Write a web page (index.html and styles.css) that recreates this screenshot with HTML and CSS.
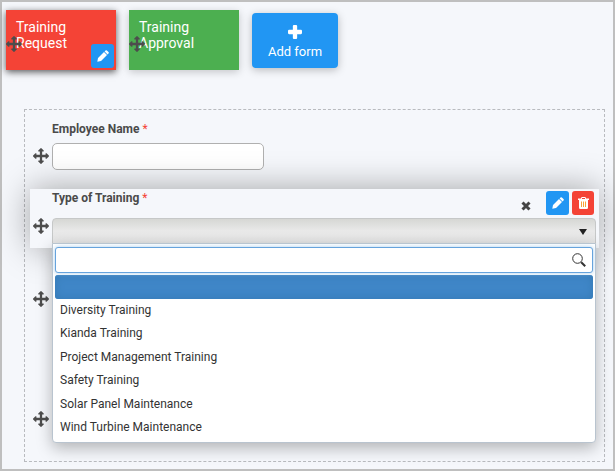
FILE: index.html
```html
<!DOCTYPE html>
<html lang="en">
<head>
<meta charset="utf-8">
<meta name="viewport" content="width=device-width, initial-scale=1">
<title>Form designer</title>
<link rel="stylesheet" href="styles.css">
</head>
<body>
<svg class="sprite" aria-hidden="true">
  <symbol id="move" viewBox="0 0 1792 1792"><path d="M1792 896q0 26-19 45l-256 256q-19 19-45 19t-45-19-19-45v-128h-384v384h128q26 0 45 19t19 45-19 45l-256 256q-19 19-45 19t-45-19l-256-256q-19-19-19-45t19-45 45-19h128v-384h-384v128q0 26-19 45t-45 19-45-19l-256-256q-19-19-19-45t19-45l256-256q19-19 45-19t45 19 19 45v128h384v-384h-128q-26 0-45-19t-19-45 19-45l256-256q19-19 45-19t45 19l256 256q19 19 19 45t-19 45-45 19h-128v384h384v-128q0-26 19-45t45-19 45 19l256 256q19 19 19 45z"/></symbol>
  <symbol id="pencil" viewBox="0 0 12 12"><path d="M.3 11.700 1 8 7 2 10 5 4 11zM7.600 1.400l.9-.9q.7-.6 1.400 0l1.600 1.600q.6.7 0 1.400l-.9.9z"/></symbol>
</svg>
<main class="page">
  <nav class="forms" aria-label="Forms">
    <section class="card card-active">
      <span class="card-title">Training Request</span>
      <svg class="icon-move card-move" aria-hidden="true"><use href="#move"/></svg>
      <button class="tool tool-edit card-edit" aria-label="Edit form"><svg class="icon-pencil"><use href="#pencil"/></svg></button>
    </section>
    <section class="card card-approval">
      <span class="card-title">Training Approval</span>
      <svg class="icon-move card-move" aria-hidden="true"><use href="#move"/></svg>
    </section>
    <button class="add-form">
      <svg class="icon-plus" viewBox="0 0 13 13" aria-hidden="true"><path d="M4.500 1q0-1 1-1h2q1 0 1 1v3.500H12q1 0 1 1v2q0 1-1 1H8.500V12q0 1-1 1h-2q-1 0-1-1V8.500H1q-1 0-1-1v-2q0-1 1-1h3.500z"/></svg>
      <span>Add form</span>
    </button>
  </nav>
  <form class="canvas">
    <div class="field">
      <label class="label" for="employee">Employee Name <span class="required">*</span></label>
      <div class="row">
        <svg class="icon-move" aria-hidden="true"><use href="#move"/></svg>
        <input class="text" id="employee" type="text">
      </div>
    </div>
    <div class="field field-active">
      <div class="heading">
        <label class="label" for="training">Type of Training <span class="required">*</span></label>
        <div class="tools">
          <button class="clear" type="button" aria-label="Clear"><svg class="icon-clear" viewBox="0 0 10 10"><path d="M1.500 1.500l7 7M8.500 1.500l-7 7"/></svg></button>
          <button class="tool tool-edit" type="button" aria-label="Edit field"><svg class="icon-pencil"><use href="#pencil"/></svg></button>
          <button class="tool tool-delete" type="button" aria-label="Delete field"><svg class="icon-trash" viewBox="0 0 11 12"><path class="trash-body" d="M3 1.500Q3 0 4 0h3q1 0 1 1.500h3V3h-1v7.500q0 1.500-1.200 1.500H2.200Q1 12 1 10.500V3H0V1.500z"/><path class="trash-top" d="M4 1.500h3"/><path class="trash-lines" d="M3.500 4.500v5.500M5.500 4.500v5.500M7.500 4.500v5.500"/></svg></button>
        </div>
      </div>
      <div class="row">
        <svg class="icon-move" aria-hidden="true"><use href="#move"/></svg>
        <div class="combo">
          <select class="select" id="training"><option></option></select>
          <svg class="icon-arrow" viewBox="0 0 8 6" aria-hidden="true"><path d="M0 0h8L4 6z"/></svg>
          <div class="dropdown">
            <div class="search-box">
              <input class="search" type="text" aria-label="Search options">
              <svg class="icon-search" viewBox="0 0 14 14" aria-hidden="true"><circle cx="5.500" cy="5.500" r="4.800"/><path class="handle" d="M9.200 9.200l4 4"/></svg>
            </div>
            <ul class="options" role="listbox" aria-label="Type of Training">
              <li class="option option-selected" role="option" aria-selected="true"></li>
              <li class="option" role="option">Diversity Training</li>
              <li class="option" role="option">Kianda Training</li>
              <li class="option" role="option">Project Management Training</li>
              <li class="option" role="option">Safety Training</li>
              <li class="option" role="option">Solar Panel Maintenance</li>
              <li class="option" role="option">Wind Turbine Maintenance</li>
            </ul>
          </div>
        </div>
      </div>
    </div>
    <div class="field field-medium"><svg class="icon-move" aria-hidden="true"><use href="#move"/></svg></div>
    <div class="field field-large"><svg class="icon-move" aria-hidden="true"><use href="#move"/></svg></div>
  </form>
</main>
</body>
</html>
```
FILE: styles.css
```css
* { box-sizing: border-box; }
body { margin: 0; background: #f5f7fb; color: #333; font: 12px/16px Roboto, "Liberation Sans", sans-serif; }
button { border: 0; padding: 0; font: inherit; color: inherit; }
svg { display: block; flex: none; }
.sprite { display: none; }
.page { min-height: 100vh; border: 2px solid #bfbfbf; padding: 8px 8px 7px 4px; }

.forms { display: flex; gap: 13px; align-items: flex-start; }
.card { position: relative; width: 110px; height: 60px; padding: 9px 10px; color: #fff; font-size: 14px; box-shadow: 0 2px 8px rgba(0, 0, 0, .2); }
.card-title { display: block; width: 64px; }
.card-active { background: #f44336; box-shadow: 0 2px 7px rgba(0, 0, 0, .65); }
.card-approval { background: #4caf50; }
.card-move { position: absolute; left: 0; top: 26px; }
.card-edit { position: absolute; right: 2px; bottom: 2px; }
.add-form { display: flex; flex-direction: column; align-items: center; gap: 5px; width: 86px; height: 55px; margin-top: 3px; padding-top: 12px; border-radius: 4px; background: #2196f3; color: #fff; font-size: 13px; box-shadow: 0 2px 8px rgba(0, 0, 0, .25); }

.icon-move { width: 16px; height: 16px; fill: #4d4d4d; }
.icon-plus { width: 14px; height: 14px; fill: #fff; }
.icon-pencil { width: 12px; height: 12px; fill: #fff; }
.icon-trash { width: 11px; height: 12px; }
.trash-body { fill: #fff; }
.trash-top { stroke: #f44336; stroke-width: 1; }
.trash-lines { stroke: #f9a43a; stroke-width: 1; }
.icon-clear { width: 10px; height: 10px; stroke: #444; stroke-width: 3; }
.icon-search { position: absolute; right: 7px; top: 6px; width: 14px; height: 14px; fill: none; stroke: #333; stroke-width: 1; }
.handle { stroke-width: 2; }
.icon-arrow { position: absolute; right: 9px; top: 11px; width: 8px; height: 6px; fill: #222; pointer-events: none; }

.tool { display: grid; place-items: center; width: 23px; height: 24px; border-radius: 3px; }
.tool-edit { background: #2196f3; }
.tool-delete { width: 22px; background: #f44336; }

.canvas { margin: 39px 0 0 18px; padding: 5px; border: 1px dashed #b9bbbf; }
.field { position: relative; padding: 0 3px; }
.label { display: block; padding: 6px 0 0 19px; font-weight: 700; color: #4a4a4a; }
.required { color: #f44336; font-weight: 400; }
.row { display: flex; align-items: center; gap: 3px; }
.field > .row { padding-bottom: 19px; }
.text { width: 212px; height: 27px; margin-top: 6px; padding: 0 8px; border: 1px solid #b0b0b0; border-radius: 5px; background: #fff; font: inherit; }
.row .icon-move { margin-top: 5px; }

.field-active { z-index: 1; background: #f5f7fb; box-shadow: 0 0 34px rgba(0, 0, 0, .35); }
.field-active > .row { align-items: flex-start; padding-bottom: 4px; }
.field-active > .row > .icon-move { margin-top: 0; }
.heading { display: flex; justify-content: space-between; height: 29px; }
.heading .label { padding-top: 1px; }
.tools { display: flex; align-items: flex-start; gap: 3px; padding: 2px 2px 0 0; }
.clear { align-self: flex-end; margin: 0 12px 7px 0; background: none; }
.combo { position: relative; flex: 1; }
.select { display: block; appearance: none; width: 100%; height: 26px; padding: 0 24px 0 8px; border: 1px solid #c6c8c8; border-radius: 4px 4px 0 0; background: linear-gradient(#d6d7d4, #e9e9e9 50%, #e6e6e6); font: inherit; }
.dropdown { position: absolute; left: 0; right: 0; top: 25px; padding: 3px 2px 2px; border: 1px solid #b9c4cf; border-radius: 0 0 4px 4px; background: #fff; box-shadow: 0 5px 16px rgba(0, 0, 0, .28); }
.search-box { position: relative; margin-bottom: 2px; }
.search { display: block; width: 100%; height: 26px; padding: 0 26px 0 8px; border: 1px solid #66a3dc; border-radius: 3px; background: #fff; font: inherit; box-shadow: 0 0 4px #a9cdec; }
.options { display: flex; flex-direction: column; margin: 0; padding: 0; list-style: none; }
.option { padding: 3px 5px 4px; line-height: 16px; }
.option:nth-child(odd) { line-height: 17px; }
.option-selected { height: 24px; border-radius: 3px; background: #3f86c7; box-shadow: inset 0 0 8px #3579b4; }
.field-medium { height: 120px; padding-top: 43px; }
.field-large { height: 88px; padding-top: 43px; }
```
